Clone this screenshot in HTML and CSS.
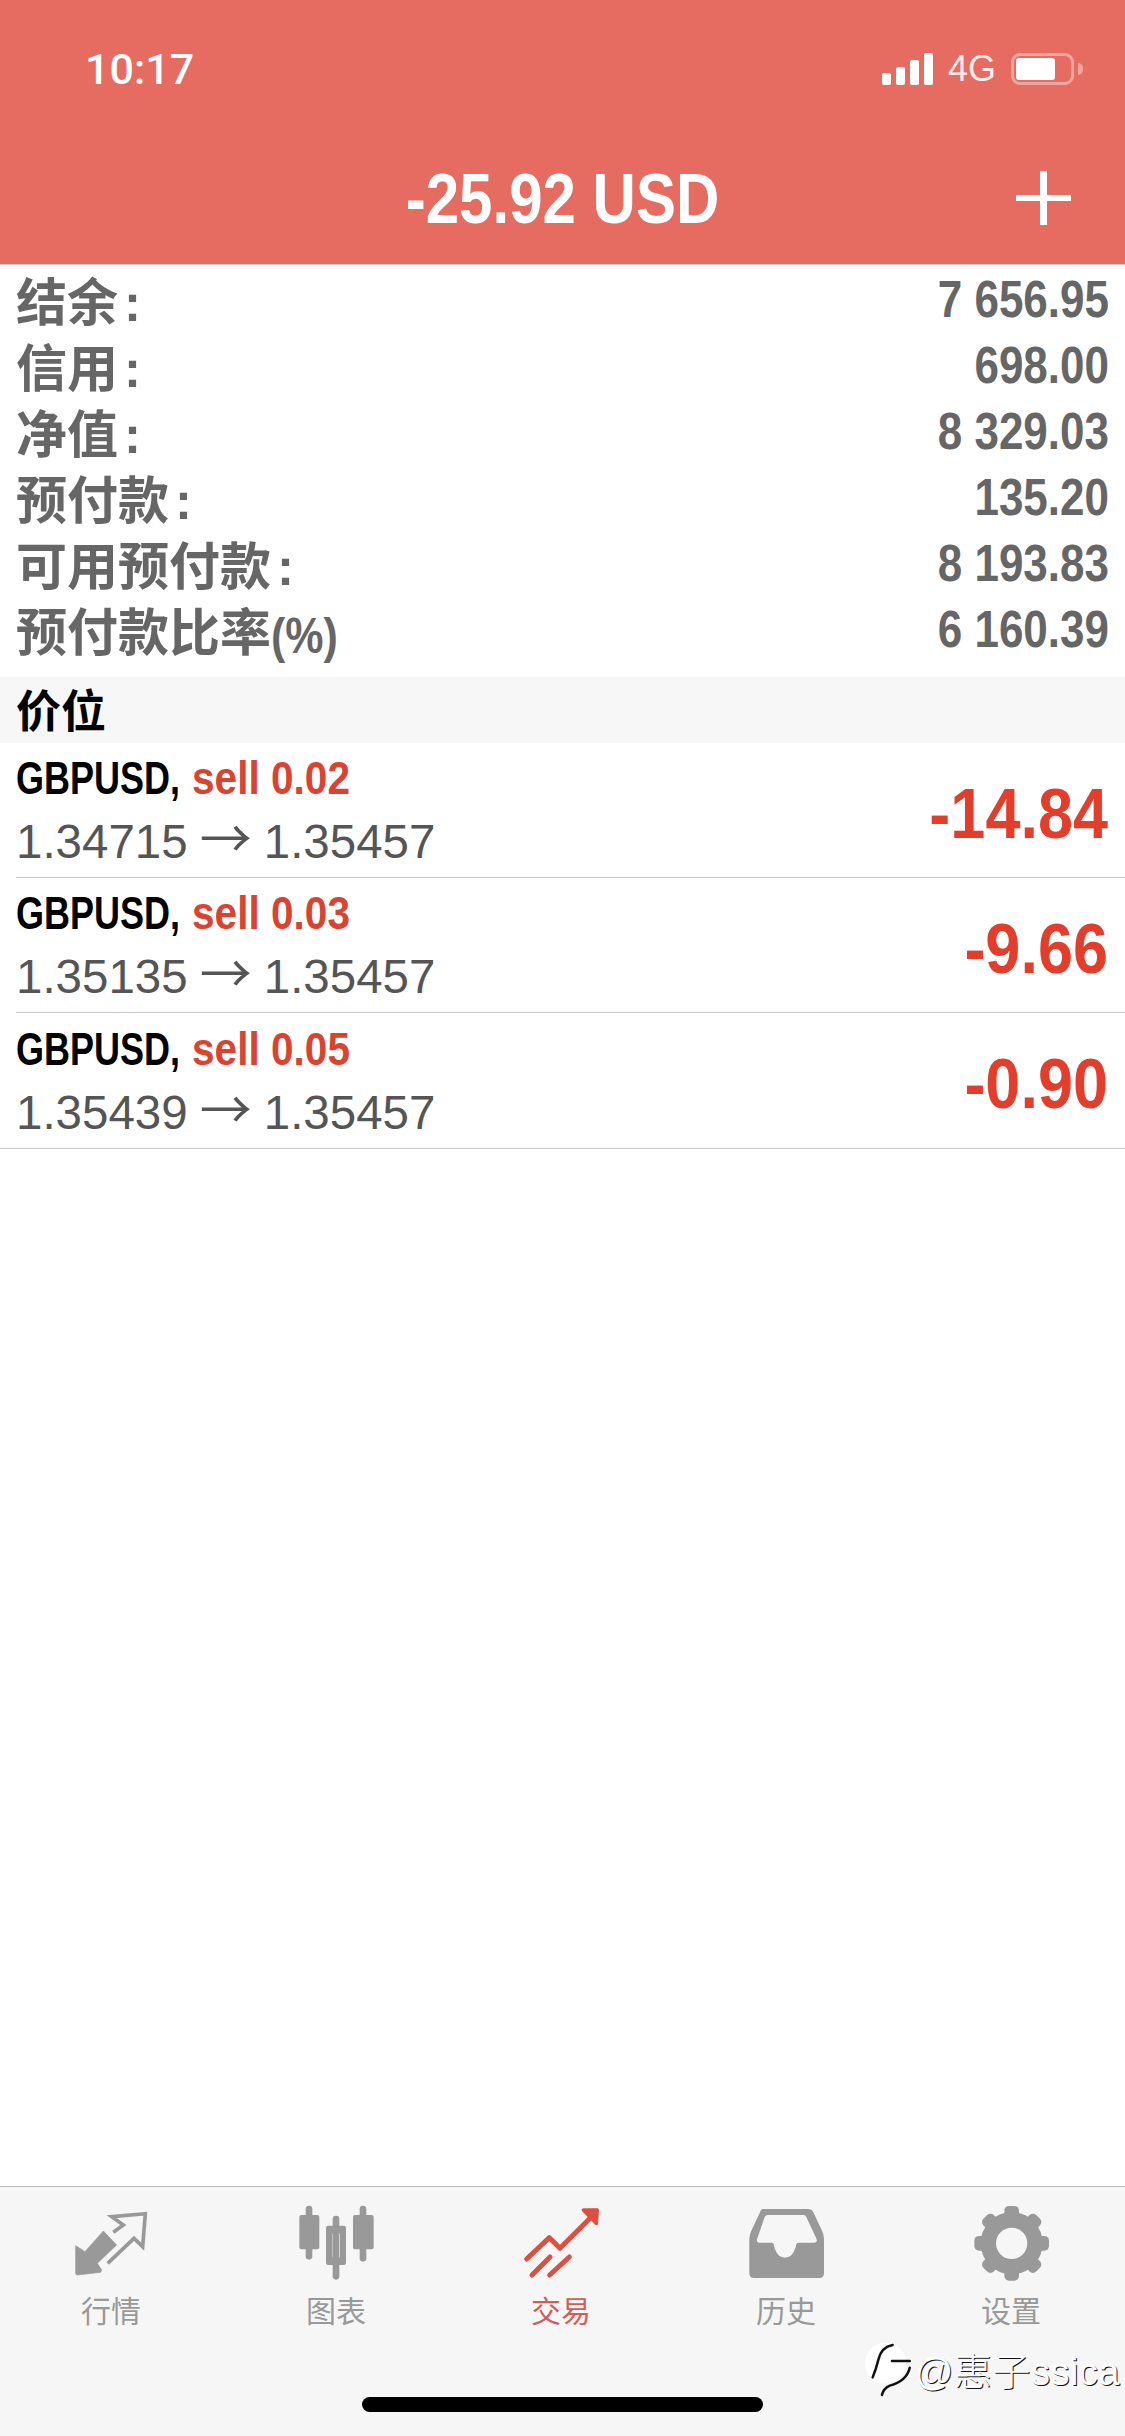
FILE: index.html
```html
<!DOCTYPE html>
<html lang="zh-CN">
<head>
  <meta charset="UTF-8" />
  <meta name="viewport" content="width=device-width, initial-scale=1.0" />
  <title>交易</title>
  <link rel="stylesheet" href="styles.css">
</head>
<body>
  <header class="top">
    <div class="status">
      <span class="time">10:17</span>
      <div class="status-right">
        <div class="signal"><i class="b1"></i><i class="b2"></i><i class="b3"></i><i class="b4"></i></div>
        <span class="net">4G</span>
        <div class="battery"><div class="battery-fill"></div></div>
        <div class="battery-nub"></div>
      </div>
    </div>
    <div class="title-row">
      <span></span>
      <h1 class="title">-25.92 USD</h1>
      <div class="plus"></div>
    </div>
  </header>

  <main class="content">
    <section class="summary">
      <div class="sum-row"><span class="sum-label">结余<span class="colon">:</span></span><span class="sum-value">7 656.95</span></div>
      <div class="sum-row"><span class="sum-label">信用<span class="colon">:</span></span><span class="sum-value">698.00</span></div>
      <div class="sum-row"><span class="sum-label">净值<span class="colon">:</span></span><span class="sum-value">8 329.03</span></div>
      <div class="sum-row"><span class="sum-label">预付款<span class="colon">:</span></span><span class="sum-value">135.20</span></div>
      <div class="sum-row"><span class="sum-label">可用预付款<span class="colon">:</span></span><span class="sum-value">8 193.83</span></div>
      <div class="sum-row"><span class="sum-label">预付款比率<span class="pct">(%)</span></span><span class="sum-value">6 160.39</span></div>
    </section>

    <div class="band">价位</div>

    <div class="order">
      <div class="order-left">
        <div class="order-head"><span class="sym">GBPUSD,</span><span class="side">sell 0.02</span></div>
        <div class="order-price">1.34715<span class="arrow">→</span>1.35457</div>
      </div>
      <span class="order-pl">-14.84</span>
    </div>
    <div class="order">
      <div class="order-left">
        <div class="order-head"><span class="sym">GBPUSD,</span><span class="side">sell 0.03</span></div>
        <div class="order-price">1.35135<span class="arrow">→</span>1.35457</div>
      </div>
      <span class="order-pl">-9.66</span>
    </div>
    <div class="order last">
      <div class="order-left">
        <div class="order-head"><span class="sym">GBPUSD,</span><span class="side">sell 0.05</span></div>
        <div class="order-price">1.35439<span class="arrow">→</span>1.35457</div>
      </div>
      <span class="order-pl">-0.90</span>
    </div>
  </main>

  <nav class="tabbar">
    <div class="tab">
      <svg class="tab-icon" viewBox="0 0 300 285">
        <path d="M47 152 L75 170 L130 108 L170 150 L112 205 L125 225 L122 232 L52 240 Q47 240 47 235 Z" fill="#999" stroke="#999" stroke-width="2" stroke-linejoin="round"/>
        <path d="M160 112 L190 90 L155 65 L256 56 L248 155 L222 130 L143 205" fill="none" stroke="#999" stroke-width="11"/>
      </svg>
      <span class="tab-label">行情</span>
    </div>
    <div class="tab">
      <svg class="tab-icon" viewBox="0 0 300 285">
        <g fill="#999">
          <rect x="62" y="32" width="20" height="162" rx="10"/>
          <rect x="43" y="60" width="60" height="103" rx="6"/>
          <rect x="143" y="62" width="20" height="192" rx="10"/>
          <path fill-rule="evenodd" d="M129 92 H177 Q183 92 183 98 V204 Q183 210 177 210 H129 Q123 210 123 204 V98 Q123 92 129 92 Z M150 112 Q142 112 142 120 V182 Q142 190 150 190 H157 Q165 190 165 182 V120 Q165 112 157 112 Z"/>
          <rect x="224" y="32" width="20" height="168" rx="10"/>
          <rect x="204" y="60" width="62" height="103" rx="6"/>
        </g>
      </svg>
      <span class="tab-label">图表</span>
    </div>
    <div class="tab active">
      <svg class="tab-icon" viewBox="0 0 300 285">
        <g fill="none" stroke="#dc4f41" stroke-width="15" stroke-linecap="round" stroke-linejoin="round">
          <path d="M50 192 L118 128 L150 160 L250 60"/>
          <path d="M220 45 L262 45 L259 86 Z" fill="#dc4f41" stroke-width="10"/>
          <path d="M66 240 L120 186"/>
          <path d="M119 240 L178 186"/>
        </g>
      </svg>
      <span class="tab-label">交易</span>
    </div>
    <div class="tab">
      <svg class="tab-icon" viewBox="0 0 300 285">
        <path fill="#999" fill-rule="evenodd" d="M82 42 H218 Q230 42 235 52 L260 105 Q267 118 267 132 V235 Q267 249 253 249 H57 Q43 249 43 235 V132 Q43 118 50 105 L75 52 Q78 42 82 42 Z M98 60 Q92 60 89 66 L66 133 Q64 143 72 143 H110 Q115 143 116 148 Q124 188 150 188 Q176 188 184 148 Q185 143 190 143 H239 Q247 143 245 133 L214 66 Q211 60 205 60 Z"/>
      </svg>
      <span class="tab-label">历史</span>
    </div>
    <div class="tab">
      <svg class="tab-icon" viewBox="0 0 300 285">
        <g fill="#999">
          <rect x="133" y="33" width="44" height="50" rx="14"/>
          <rect x="133" y="33" width="44" height="50" rx="14" transform="rotate(45 155 145)"/>
          <rect x="133" y="33" width="44" height="50" rx="14" transform="rotate(90 155 145)"/>
          <rect x="133" y="33" width="44" height="50" rx="14" transform="rotate(135 155 145)"/>
          <rect x="133" y="33" width="44" height="50" rx="14" transform="rotate(180 155 145)"/>
          <rect x="133" y="33" width="44" height="50" rx="14" transform="rotate(225 155 145)"/>
          <rect x="133" y="33" width="44" height="50" rx="14" transform="rotate(270 155 145)"/>
          <rect x="133" y="33" width="44" height="50" rx="14" transform="rotate(315 155 145)"/>
        </g>
        <circle cx="155" cy="145" r="70" fill="none" stroke="#999" stroke-width="46"/>
      </svg>
      <span class="tab-label">设置</span>
    </div>

    <div class="home-bar"></div>

    <div class="watermark">
      <svg class="wm-logo" viewBox="25 30 140 160">
        <circle cx="88" cy="95" r="58" fill="#fff"/>
        <g fill="none" stroke="#111" stroke-width="7" stroke-linecap="round">
          <path d="M52 135 Q62 110 68 85 Q76 50 108 44"/>
          <path d="M106 89 H156"/>
          <path d="M156 108 Q148 145 100 158 Q82 166 78 184"/>
        </g>
      </svg>
      <span class="wm-text">@惠子ssica</span>
    </div>
  </nav>
</body>
</html>
```

FILE: styles.css
```css
* {
  box-sizing: border-box;
}
body {
  margin: 0;
  width: 1125px;
  height: 2436px;
  display: flex;
  flex-direction: column;
  overflow: hidden;
  background: #fff;
  font-family: 'Liberation Sans', 'Noto Sans CJK SC', sans-serif;
}

/* header */
.top {
  height: 265px;
  background: #e66c61;
  border-bottom: 1px solid #cfcfcf;
  color: #fff;
}
.status {
  height: 138px;
  display: flex;
  justify-content: space-between;
  align-items: center;
  padding: 0 42px 0 85px;
}
.time {
  font-family: Roboto, sans-serif;
  font-weight: 500;
  font-size: 43px;
}
.status-right {
  display: flex;
  align-items: center;
}
.signal {
  display: flex;
  align-items: flex-end;
  gap: 5px;
  height: 32px;
}
.signal i {
  display: block;
  width: 9px;
  background: #fff;
  border-radius: 2px;
}
.b1 { height: 12px; }
.b2 { height: 18px; }
.b3 { height: 25px; }
.b4 { height: 32px; }
.net {
  margin-left: 15px;
  font-size: 36px;
  color: rgba(255, 255, 255, 0.9);
}
.battery {
  margin-left: 15px;
  width: 63px;
  height: 32px;
  padding: 2px;
  border: 3px solid rgba(255, 255, 255, 0.4);
  border-radius: 9px;
}
.battery-fill {
  width: 39px;
  height: 22px;
  background: #fff;
  border-radius: 3px;
}
.battery-nub {
  width: 5px;
  height: 12px;
  margin-left: 4px;
  background: rgba(255, 255, 255, 0.4);
  border-radius: 0 6px 6px 0;
}
.title-row {
  display: grid;
  grid-template-columns: 1fr auto 1fr;
  align-items: center;
  height: 120px;
  padding: 0 54px;
}
.title {
  margin: 0;
  font-size: 60px;
  font-weight: 700;
  transform: scaleY(1.18);
}
.plus {
  justify-self: end;
  position: relative;
  width: 55px;
  height: 54px;
}
.plus::before,
.plus::after {
  content: "";
  position: absolute;
  background: #fff;
}
.plus::before {
  left: 0;
  right: 0;
  top: 24px;
  height: 6px;
}
.plus::after {
  top: 0;
  bottom: 0;
  left: 24px;
  width: 7px;
}

/* account summary */
.content {
  flex: 1;
}
.summary {
  padding: 1px 16px 15px;
}
.sum-row {
  display: flex;
  justify-content: space-between;
  align-items: center;
  height: 66px;
}
.sum-label {
  font-size: 51px;
  font-weight: 700;
  color: #666;
}
.colon {
  margin-left: 6px;
}
.pct {
  display: inline-block;
  font-size: 43px;
  transform: scaleY(1.15);
}
.sum-value {
  font-size: 44px;
  font-weight: 700;
  color: #666;
  transform: scaleY(1.18);
}
.band {
  height: 66px;
  padding-left: 16px;
  padding-bottom: 3px;
  display: flex;
  align-items: center;
  background: #f7f7f7;
  font-size: 45px;
  font-weight: 700;
  color: #000;
}

/* open orders */
.order {
  height: 135px;
  margin-left: 16px;
  padding-right: 17px;
  display: flex;
  justify-content: space-between;
  align-items: center;
  border-bottom: 1px solid #c8c8c8;
}
.order.last {
  height: 136px;
  margin-left: 0;
  padding-left: 16px;
}
.order-left {
  display: flex;
  flex-direction: column;
  gap: 9px;
  padding-top: 3px;
}
.order-head {
  display: flex;
  gap: 12px;
  align-items: baseline;
  line-height: 50px;
}
.sym {
  font-size: 36px;
  font-weight: 700;
  color: #000;
  transform: scaleY(1.27);
  transform-origin: 50% 72%;
}
.side {
  font-size: 40.6px;
  font-weight: 700;
  color: #d9432f;
  transform: scaleY(1.14);
  transform-origin: 50% 72%;
}
.order-price {
  font-size: 47.5px;
  line-height: 52px;
  color: #555;
}
.arrow {
  margin: 0 12px;
  font-family: 'Noto Sans CJK SC', sans-serif;
  font-size: 52px;
  line-height: 0;
}
.order-pl {
  margin-top: 5px;
  font-size: 63px;
  font-weight: 700;
  color: #e33d2b;
  transform: scaleY(1.13);
}

/* tab bar */
.tabbar {
  position: relative;
  height: 250px;
  display: flex;
  padding-right: 3px;
  background: #f6f6f6;
  border-top: 1px solid #b8b8b8;
}
.tab {
  flex: 1;
  display: flex;
  flex-direction: column;
  align-items: center;
  padding-top: 8px;
  color: #999;
}
.tab:first-child {
  margin-left: -3px;
}
.tab.active {
  color: #cf5f55;
}
.tab-icon {
  width: 100px;
  height: 95px;
}
.tab-label {
  margin: 3px 0 0 3px;
  font-size: 30px;
  line-height: 38px;
}
.home-bar {
  position: absolute;
  left: 362px;
  top: 210px;
  width: 401px;
  height: 15px;
  background: #000;
  border-radius: 8px;
}
.watermark {
  position: absolute;
  right: 5px;
  top: 153px;
  display: flex;
  align-items: center;
  gap: 2px;
}
.wm-logo {
  width: 50px;
  height: 57px;
}
.wm-text {
  font-size: 38px;
  font-weight: 300;
  letter-spacing: 0.5px;
  color: #fff;
  text-shadow: 1px 1px 0 #111;
}
```
